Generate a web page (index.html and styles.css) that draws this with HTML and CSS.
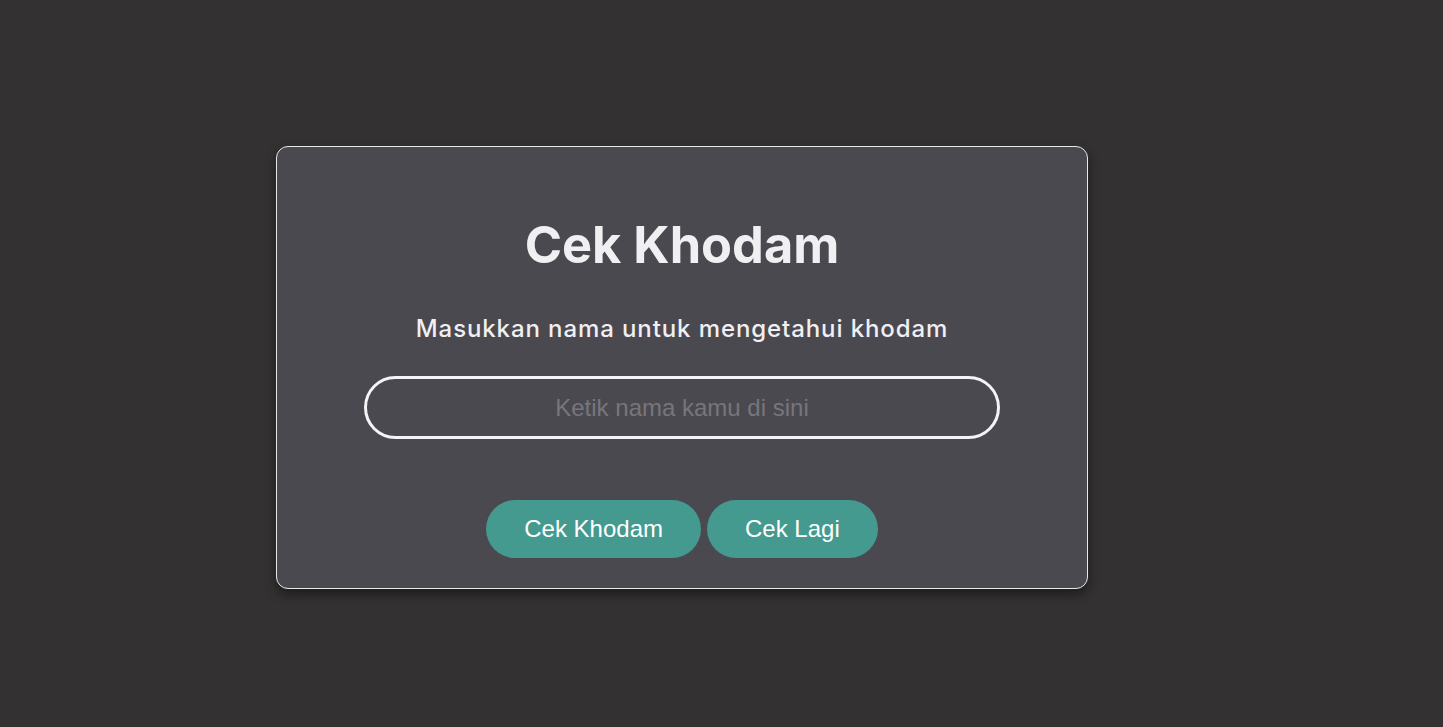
FILE: index.html
```html
<!DOCTYPE html>
<html lang="id">
<head>
<meta charset="utf-8">
<title>Cek Khodam</title>
<link rel="stylesheet" href="styles.css">
</head>
<body>
<main class="page">
  <section class="card">
    <h1 class="title">Cek Khodam</h1>
    <p class="subtitle">Masukkan nama untuk mengetahui khodam</p>
    <input class="name-input" type="text" placeholder="Ketik nama kamu di sini">
    <div class="actions">
      <button class="btn">Cek Khodam</button>
      <button class="btn">Cek Lagi</button>
    </div>
  </section>
</main>
</body>
</html>
```

FILE: styles.css
```css
* { box-sizing: border-box; }
html, body { margin: 0; height: 100%; }
body {
  background: #333132;
  font-family: "Inter", "Liberation Sans", sans-serif;
}
.page {
  height: 100%;
  display: flex;
  align-items: center;
  padding-left: 276px;
  padding-top: 8px;
}
.card {
  width: 812px;
  height: 443px;
  background: #4b4950;
  border: 1px solid #e8e8ea;
  border-radius: 12px;
  box-shadow: 0 5px 12px rgba(0, 0, 0, 0.45);
  display: flex;
  flex-direction: column;
  align-items: center;
  padding-top: 68px;
}
.title {
  margin: 0;
  color: #f0eff1;
  font-family: "Inter", sans-serif;
  font-weight: 700;
  font-size: 50.5px;
  line-height: 60px;
}
.subtitle {
  margin: 38px 0 0;
  color: #f0eff1;
  font-family: "Inter", sans-serif;
  font-weight: 500;
  font-size: 24px;
  line-height: 32px;
  letter-spacing: 0.9px;
}
.name-input {
  margin-top: 31px;
  width: 636px;
  height: 63px;
  border: 3px solid #f4f4f6;
  border-radius: 32px;
  background: transparent;
  color: #f0eff1;
  text-align: center;
  font-family: "Liberation Sans", Arial, sans-serif;
  font-size: 24px;
  outline: none;
}
.name-input::placeholder { color: #77767b; }
.actions {
  margin-top: 61px;
  display: flex;
  gap: 6px;
}
.btn {
  height: 58px;
  padding: 0 38px;
  border: none;
  border-radius: 29px;
  background: #449a8e;
  color: #ffffff;
  font-family: "Liberation Sans", Arial, sans-serif;
  font-size: 24px;
}
```
